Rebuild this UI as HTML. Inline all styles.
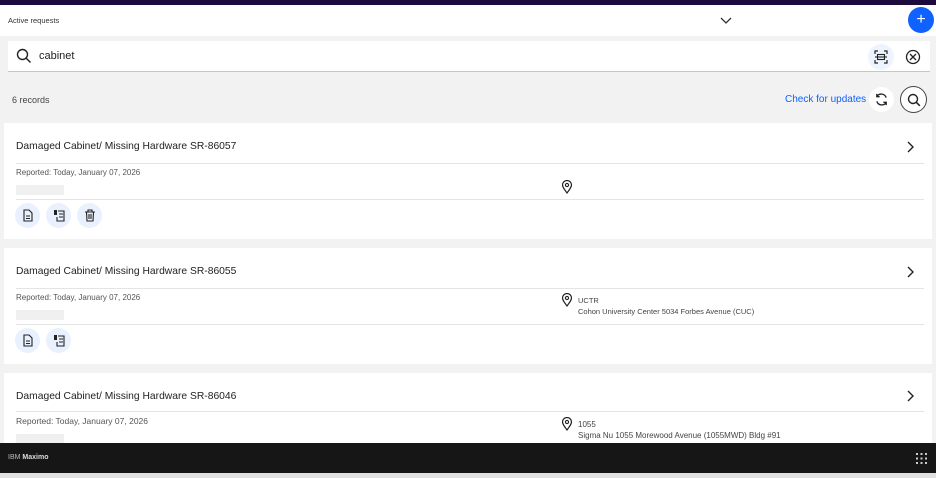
<!DOCTYPE html>
<html><head><meta charset="utf-8"><style>
*{box-sizing:border-box;margin:0;padding:0}
body{width:936px;height:478px;overflow:hidden;background:#f2f2f2;font-family:"Liberation Sans",sans-serif;color:#161616;position:relative}
.abs{position:absolute}
.card{position:absolute;left:4px;width:928px;background:#fff}
.title{position:absolute;left:12px;font-size:10.3px;color:#222}
.hr{position:absolute;left:12px;right:8px;height:1px;background:#e4e4e4}
.rep{position:absolute;left:12px;font-size:8px;color:#555}
.grey{position:absolute;left:12px;width:48px;height:10px;background:#f0f0f0}
.ib{position:absolute;width:25px;height:25px;border-radius:50%;background:#e8f1fd;display:flex;align-items:center;justify-content:center}
.chev{position:absolute;right:18px}
.loc{position:absolute;left:560px;font-size:7.5px;color:#444;line-height:11px}
</style></head><body>
<div class="abs" style="left:0;top:0;width:936px;height:5px;background:#1c0b3c"></div>
<div class="abs" style="left:0;top:5px;width:936px;height:31px;background:#fff"></div>
<div class="abs" style="left:8px;top:16px;font-size:7.5px;color:#333">Active requests</div>
<svg class="abs" style="left:720px;top:15px" width="12" height="10" viewBox="0 0 12 10"><path d="M1 3l5 5 5-5" fill="none" stroke="#333" stroke-width="1.3"/></svg>
<div class="abs" style="left:908px;top:7px;width:26px;height:26px;border-radius:50%;background:#0f62fe;color:#fff;font-size:16px;text-align:center;line-height:25px">+</div>
<div class="abs" style="left:8px;top:41px;width:922px;height:31px;background:#fff;border-bottom:1px solid #c6c6c6"></div>
<svg class="abs" style="left:16px;top:48px" width="16" height="16" viewBox="0 0 16 16"><circle cx="6.5" cy="6.5" r="5" fill="none" stroke="#222" stroke-width="1.4"/><path d="M10 10l4.5 4.5" stroke="#222" stroke-width="1.4"/></svg>
<div class="abs" style="left:39px;top:50px;font-size:11px;color:#222">cabinet</div>
<div class="abs" style="left:868px;top:44px;width:26px;height:26px;border-radius:50%;background:#edf4fe"></div>
<svg class="abs" style="left:874px;top:50px" width="14" height="14" viewBox="0 0 14 14"><path d="M1 4V1h3M10 1h3v3M13 10v3h-3M4 13H1v-3" fill="none" stroke="#222" stroke-width="1.2"/><rect x="3.5" y="4.5" width="7" height="5" fill="none" stroke="#222" stroke-width="1.1"/><path d="M1 7h12" stroke="#222" stroke-width="1.1"/></svg>
<svg class="abs" style="left:905px;top:49px" width="16" height="16" viewBox="0 0 16 16"><circle cx="8" cy="8" r="6.5" fill="none" stroke="#222" stroke-width="1.3"/><path d="M5 5l6 6M11 5l-6 6" stroke="#222" stroke-width="1.3"/></svg>
<div class="abs" style="left:12px;top:95px;font-size:9px;color:#444">6 records</div>
<div class="abs" style="left:785px;top:94px;font-size:10px;color:#0f62fe">Check for updates</div>
<div class="abs" style="left:869px;top:87px;width:25px;height:25px;border-radius:50%;background:#fff"></div>
<svg class="abs" style="left:874px;top:92px" width="15" height="15" viewBox="0 0 16 16"><path d="M13 6A5.5 5.5 0 0 0 3 5M3 10a5.5 5.5 0 0 0 10 1" fill="none" stroke="#222" stroke-width="1.4"/><path d="M3 2v3h3M13 14v-3h-3" fill="none" stroke="#222" stroke-width="1.4"/></svg>
<div class="abs" style="left:900px;top:86px;width:27px;height:27px;border-radius:50%;border:1.3px solid #444;background:#fff"></div>
<svg class="abs" style="left:906px;top:92px" width="16" height="16" viewBox="0 0 16 16"><circle cx="7" cy="7" r="4.5" fill="none" stroke="#222" stroke-width="1.4"/><path d="M10.3 10.3l3.5 3.5" stroke="#222" stroke-width="1.5"/></svg>

<div class="card" style="top:123px;height:116px">
<div class="title" style="top:18px">Damaged Cabinet/ Missing Hardware SR-86057</div>
<svg class="chev" style="top:18px" width="8" height="12" viewBox="0 0 8 12"><path d="M2 1l5 5-5 5" fill="none" stroke="#222" stroke-width="1.4"/></svg>
<div class="hr" style="top:40px"></div>
<div class="rep" style="top:45px">Reported: Today, January 07, 2026</div>
<div class="grey" style="top:62px"></div>
<svg class="abs" style="left:557px;top:57px" width="12" height="14" viewBox="0 0 12 14"><path d="M6 13C3 9 1.5 7 1.5 5a4.5 4.5 0 0 1 9 0c0 2-1.5 4-4.5 8z" fill="none" stroke="#222" stroke-width="1.2"/><circle cx="6" cy="5" r="1.6" fill="none" stroke="#222" stroke-width="1.1"/></svg>
<div class="hr" style="top:76px"></div>
<div class="ib" style="left:11px;top:80px"><svg width="12" height="13" viewBox="0 0 12 13"><path d="M2 1h5l3 3v8H2z" fill="none" stroke="#222" stroke-width="1.1"/><path d="M4 7h4M4 9.5h4" stroke="#222"/></svg></div>
<div class="ib" style="left:42px;top:80px"><svg width="12" height="13" viewBox="0 0 12 13"><rect x="1" y="1" width="3" height="5" fill="#222"/><path d="M5 2h6v10H4V8" fill="none" stroke="#222" stroke-width="1.1"/><path d="M6 5h4M6 8h4" stroke="#222"/></svg></div>
<div class="ib" style="left:73px;top:80px"><svg width="12" height="13" viewBox="0 0 12 13"><path d="M1 3h10M4 3V1h4v2M2.5 3l.5 9h6l.5-9M5 5v5M7 5v5" fill="none" stroke="#222" stroke-width="1.1"/></svg></div>
</div>

<div class="card" style="top:248px;height:116px">
<div class="title" style="top:18px">Damaged Cabinet/ Missing Hardware SR-86055</div>
<svg class="chev" style="top:18px" width="8" height="12" viewBox="0 0 8 12"><path d="M2 1l5 5-5 5" fill="none" stroke="#222" stroke-width="1.4"/></svg>
<div class="hr" style="top:40px"></div>
<div class="rep" style="top:45px">Reported: Today, January 07, 2026</div>
<div class="grey" style="top:62px"></div>
<svg class="abs" style="left:557px;top:45px" width="12" height="14" viewBox="0 0 12 14"><path d="M6 13C3 9 1.5 7 1.5 5a4.5 4.5 0 0 1 9 0c0 2-1.5 4-4.5 8z" fill="none" stroke="#222" stroke-width="1.2"/><circle cx="6" cy="5" r="1.6" fill="none" stroke="#222" stroke-width="1.1"/></svg>
<div class="loc" style="top:47px;left:574px">UCTR<br>Cohon University Center 5034 Forbes Avenue (CUC)</div>
<div class="hr" style="top:76px"></div>
<div class="ib" style="left:11px;top:80px"><svg width="12" height="13" viewBox="0 0 12 13"><path d="M2 1h5l3 3v8H2z" fill="none" stroke="#222" stroke-width="1.1"/><path d="M4 7h4M4 9.5h4" stroke="#222"/></svg></div>
<div class="ib" style="left:42px;top:80px"><svg width="12" height="13" viewBox="0 0 12 13"><rect x="1" y="1" width="3" height="5" fill="#222"/><path d="M5 2h6v10H4V8" fill="none" stroke="#222" stroke-width="1.1"/><path d="M6 5h4M6 8h4" stroke="#222"/></svg></div>
</div>

<div class="card" style="top:373px;height:80px">
<div class="title" style="top:18px">Damaged Cabinet/ Missing Hardware SR-86046</div>
<svg class="chev" style="top:17px" width="8" height="12" viewBox="0 0 8 12"><path d="M2 1l5 5-5 5" fill="none" stroke="#222" stroke-width="1.4"/></svg>
<div class="hr" style="top:38px"></div>
<div class="rep" style="top:43px;font-size:8.5px">Reported: Today, January 07, 2026</div>
<div class="grey" style="top:61px"></div>
<svg class="abs" style="left:557px;top:44px" width="12" height="14" viewBox="0 0 12 14"><path d="M6 13C3 9 1.5 7 1.5 5a4.5 4.5 0 0 1 9 0c0 2-1.5 4-4.5 8z" fill="none" stroke="#222" stroke-width="1.2"/><circle cx="6" cy="5" r="1.6" fill="none" stroke="#222" stroke-width="1.1"/></svg>
<div class="loc" style="top:46px;left:574px;font-size:8px">1055<br>Sigma Nu 1055 Morewood Avenue (1055MWD) Bldg #91</div>
</div>

<div class="abs" style="left:0;top:443px;width:936px;height:30px;background:#161616"></div>
<div class="abs" style="left:8px;top:454px;font-size:7px;color:#ddd"><span style="color:#bbb">IBM</span> <b>Maximo</b></div>
<svg class="abs" style="left:916px;top:453px" width="11" height="11" viewBox="0 0 11 11" fill="#ccc"><rect x="0" y="0" width="2" height="2"/><rect x="4.5" y="0" width="2" height="2"/><rect x="9" y="0" width="2" height="2"/><rect x="0" y="4.5" width="2" height="2"/><rect x="4.5" y="4.5" width="2" height="2"/><rect x="9" y="4.5" width="2" height="2"/><rect x="0" y="9" width="2" height="2"/><rect x="4.5" y="9" width="2" height="2"/><rect x="9" y="9" width="2" height="2"/></svg>
<div class="abs" style="left:0;top:473px;width:936px;height:5px;background:#e0e0e0"></div>
</body></html>
